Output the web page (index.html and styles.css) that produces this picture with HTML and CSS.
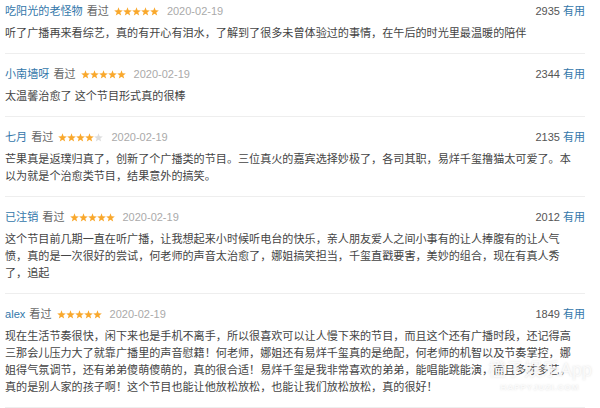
FILE: index.html
```html
<!DOCTYPE html>
<html lang="zh-CN">
<head>
  <meta charset="UTF-8">
  <title>短评</title>
  <link rel="stylesheet" href="styles.css">
</head>
<body>
  <svg width="0" height="0" class="defs">
    <defs>
      <polygon id="star" points="4.5,0.3 5.6,3.3 8.8,3.4 6.3,5.4 7.2,8.6 4.5,6.7 1.8,8.6 2.7,5.4 0.2,3.4 3.4,3.3"/>
    </defs>
  </svg>

  <div class="comments">
    <div class="comment">
      <div class="info">
        <a class="user">吃阳光的老怪物</a>
        <span class="status">看过</span>
        <span class="stars">
          <svg viewBox="0 0 45 9"><use href="#star" x="0" class="on"/><use href="#star" x="9" class="on"/><use href="#star" x="18" class="on"/><use href="#star" x="27" class="on"/><use href="#star" x="36" class="on"/></svg>
        </span>
        <span class="date">2020-02-19</span>
        <span class="votes">2935 <a>有用</a></span>
      </div>
      <p class="text">听了广播再来看综艺，真的有开心有泪水，了解到了很多未曾体验过的事情，在午后的时光里最温暖的陪伴</p>
    </div>

    <div class="comment">
      <div class="info">
        <a class="user">小南墙呀</a>
        <span class="status">看过</span>
        <span class="stars">
          <svg viewBox="0 0 45 9"><use href="#star" x="0" class="on"/><use href="#star" x="9" class="on"/><use href="#star" x="18" class="on"/><use href="#star" x="27" class="on"/><use href="#star" x="36" class="on"/></svg>
        </span>
        <span class="date">2020-02-19</span>
        <span class="votes">2344 <a>有用</a></span>
      </div>
      <p class="text">太温馨治愈了 这个节目形式真的很棒</p>
    </div>

    <div class="comment">
      <div class="info">
        <a class="user">七月</a>
        <span class="status">看过</span>
        <span class="stars">
          <svg viewBox="0 0 45 9"><use href="#star" x="0" class="on"/><use href="#star" x="9" class="on"/><use href="#star" x="18" class="on"/><use href="#star" x="27" class="on"/><use href="#star" x="36" class="off"/></svg>
        </span>
        <span class="date">2020-02-19</span>
        <span class="votes">2135 <a>有用</a></span>
      </div>
      <p class="text">芒果真是返璞归真了，创新了个广播类的节目。三位真火的嘉宾选择妙极了，各司其职，易烊千玺撸猫太可爱了。本以为就是个治愈类节目，结果意外的搞笑。</p>
    </div>

    <div class="comment">
      <div class="info">
        <a class="user">已注销</a>
        <span class="status">看过</span>
        <span class="stars">
          <svg viewBox="0 0 45 9"><use href="#star" x="0" class="on"/><use href="#star" x="9" class="on"/><use href="#star" x="18" class="on"/><use href="#star" x="27" class="on"/><use href="#star" x="36" class="on"/></svg>
        </span>
        <span class="date">2020-02-19</span>
        <span class="votes">2012 <a>有用</a></span>
      </div>
      <p class="text">这个节目前几期一直在听广播，让我想起来小时候听电台的快乐，亲人朋友爱人之间小事有的让人捧腹有的让人气愤，真的是一次很好的尝试，何老师的声音太治愈了，娜姐搞笑担当，千玺直戳要害，美妙的组合，现在有真人秀了，追起</p>
    </div>

    <div class="comment">
      <div class="info">
        <a class="user">alex</a>
        <span class="status">看过</span>
        <span class="stars">
          <svg viewBox="0 0 45 9"><use href="#star" x="0" class="on"/><use href="#star" x="9" class="on"/><use href="#star" x="18" class="on"/><use href="#star" x="27" class="on"/><use href="#star" x="36" class="on"/></svg>
        </span>
        <span class="date">2020-02-19</span>
        <span class="votes">1849 <a>有用</a></span>
      </div>
      <p class="text">现在生活节奏很快，闲下来也是手机不离手，所以很喜欢可以让人慢下来的节目，而且这个还有广播时段，还记得高三那会儿压力大了就靠广播里的声音慰籍！何老师，娜姐还有易烊千玺真的是绝配，何老师的机智以及节奏掌控，娜姐得气氛调节，还有弟弟傻萌傻萌的，真的很合适！易烊千玺是我非常喜欢的弟弟，能唱能跳能演，而且多才多艺，真的是别人家的孩子啊！这个节目也能让他放松放松，也能让我们放松放松，真的很好！</p>
    </div>
  </div>

  <div class="watermark">
    <div class="wm-logo">橙子娱乐App</div>
    <div class="wm-site">HAPPYJUZI.COM</div>
  </div>
</body>
</html>
```

FILE: styles.css
```css
body { margin: 0; background: #fff; font-family: "Liberation Sans", "Noto Sans CJK SC", sans-serif; font-size: 11.1px; color: #494949; overflow: hidden; }
.defs { position: absolute; }
.comments { width: 580px; padding-left: 5px; }
.comment { padding: 12px 0 11px; border-bottom: 1px solid #eee; }
.comment:first-child { padding-top: 3px; }
.info { display: flex; align-items: center; height: 17px; line-height: 17px; }
.user { color: #37a; }
.status { color: #666; margin-left: 4px; }
.stars { display: flex; margin-left: 5px; }
.stars svg { width: 45px; height: 9px; display: block; }
.stars .on { fill: #f9a82c; }
.stars .off { fill: #ddd; }
.date { color: #aaa; margin-left: 8px; font-size: 11px; }
.votes { margin-left: auto; color: #555; font-size: 11px; }
.votes a { color: #37a; }
.text { margin: 5px 0 0; line-height: 17px; width: 572px; color: #444; }
.watermark { position: absolute; left: 488px; top: 358px; white-space: nowrap; text-align: center; color: rgba(255, 255, 255, 0.8); text-shadow: 0 0 2px rgba(140, 140, 140, 0.3); }
.wm-logo { font-size: 18px; line-height: 24px; }
.wm-site { font-size: 8px; line-height: 11px; letter-spacing: 1px; font-weight: bold; }
```
